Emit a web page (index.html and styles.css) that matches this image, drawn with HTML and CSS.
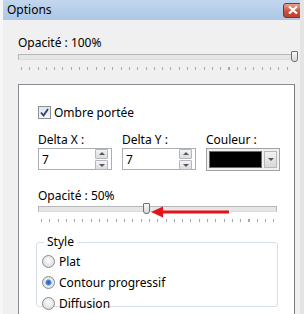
FILE: index.html
```html
<!DOCTYPE html>
<html lang="fr">
  <head>
    <meta charset="UTF-8" />
    <title>Options</title>
    <link rel="stylesheet" href="styles.css">
  </head>
  <body>
    <div class="window">
      <div class="titlebar">
        <span class="title">Options</span>
        <span class="close">
          <svg width="10" height="8" viewBox="0 0 10 8"><path d="M1 0.5 L9 7.5 M9 0.5 L1 7.5" stroke="#fff" stroke-width="2.2"/></svg>
        </span>
      </div>

      <div class="top">
        <div class="label">Opacité : 100%</div>
        <div class="slider slider-top">
          <div class="track"></div>
          <div class="thumb" style="left: 273px"></div>
          <div class="ticks"></div>
        </div>
      </div>

      <div class="panel">
        <label class="check-row">
          <span class="checkbox">
            <svg width="9" height="9" viewBox="0 0 9 9"><path d="M1 4.5 L3.5 7.5 L8 1" fill="none" stroke="#2c3e6e" stroke-width="1.8"/></svg>
          </span>
          Ombre portée
        </label>

        <div class="fields">
          <div class="field">
            <div class="field-label">Delta X :</div>
            <div class="spin">
              <span class="spin-value">7</span>
              <span class="spin-buttons">
                <span class="spin-btn up"></span>
                <span class="spin-btn down"></span>
              </span>
            </div>
          </div>
          <div class="field">
            <div class="field-label">Delta Y :</div>
            <div class="spin">
              <span class="spin-value">7</span>
              <span class="spin-buttons">
                <span class="spin-btn up"></span>
                <span class="spin-btn down"></span>
              </span>
            </div>
          </div>
          <div class="field">
            <div class="field-label">Couleur :</div>
            <div class="color-pick">
              <span class="swatch"></span>
              <span class="drop"></span>
            </div>
          </div>
        </div>

        <div class="label label-inner">Opacité : 50%</div>
        <div class="slider slider-inner">
          <div class="track"></div>
          <div class="thumb" style="left: 105px"></div>
          <div class="ticks"></div>
          <!-- red pointer drawn over the slider -->
          <svg class="arrow" width="80" height="12" viewBox="0 0 80 12">
            <path d="M0 6 L12 0.5 L12 11.5 Z" fill="#e3121b"/>
            <rect x="10" y="4.5" width="68" height="3" fill="#e3121b"/>
          </svg>
        </div>

        <fieldset class="group">
          <legend>Style</legend>
          <label class="radio-row"><span class="radio"></span>Plat</label>
          <label class="radio-row"><span class="radio checked"></span>Contour progressif</label>
          <label class="radio-row"><span class="radio"></span>Diffusion</label>
        </fieldset>
      </div>
    </div>
  </body>
</html>
```

FILE: styles.css
```css
body {
  margin: 0;
  font-family: "Noto Sans", "Open Sans", sans-serif;
  font-size: 12px;
  color: #000;
  background-color: #f0f0f0;
}
.window {
  width: 304px;
  height: 314px;
  overflow: hidden;
  background-color: #f0f0f0;
  box-sizing: border-box;
  border-left: 3px solid #f6f6f6;
  border-right: 4px solid #e4e4e4;
}
.titlebar {
  height: 20px;
  margin: 0 -4px 0 -3px;
  display: flex;
  align-items: center;
  justify-content: space-between;
  padding: 0 2px 0 7px;
  background: linear-gradient(to bottom, #c2d7ee, #adc7e5);
}
.title {
  line-height: 20px;
}
.close {
  width: 17px;
  height: 13px;
  display: flex;
  align-items: center;
  justify-content: center;
  border: 1px solid #6a3a3a;
  border-radius: 3px;
  background: linear-gradient(to bottom, #e6a592, #c9523f 55%, #c0402e);
}
.top {
  padding: 15px 0 0 15px;
}
.label {
  line-height: 15px;
}
.slider {
  position: relative;
}
.slider .track {
  height: 4px;
  border: 1px solid #b6b6b6;
  border-bottom-color: #dcdcdc;
  background-color: #e6e6e6;
}
.slider .thumb {
  position: absolute;
  top: -3px;
  width: 5px;
  height: 9px;
  border: 1px solid #707070;
  border-radius: 1px 1px 3px 3px;
  background: linear-gradient(to bottom, #f6f6f6, #dadada);
}
.slider .ticks {
  height: 3px;
  margin-top: 7px;
  background: repeating-linear-gradient(to right, #a8a8a8 0, #a8a8a8 1px, transparent 1px, transparent 8.3px);
}
.slider-top {
  margin-top: 4px;
  width: 279px;
}
.slider-top .ticks {
  margin-left: 3px;
  width: 274px;
}
.panel {
  margin: 14px 0 0 15px;
  height: 240px;
  background-color: #fff;
  border: 1px solid #898c95;
  border-right-color: #7a7a7a;
  width: 277px;
  padding: 20px 0 0 19px;
  box-sizing: border-box;
}
.check-row {
  display: flex;
  align-items: center;
  gap: 3px;
  height: 14px;
}
.checkbox {
  width: 11px;
  height: 11px;
  border: 1px solid #8e8f8f;
  background: linear-gradient(to bottom, #dfe6f2, #f4f6fa);
  display: flex;
  align-items: center;
  justify-content: center;
}
.fields {
  display: flex;
  gap: 10px;
  margin-top: 13px;
}
.field-label {
  line-height: 15px;
  height: 16px;
}
.spin {
  width: 74px;
  height: 22px;
  box-sizing: border-box;
  border: 1px solid #abadb3;
  display: flex;
  justify-content: space-between;
  align-items: center;
  padding: 0 3px 0 3px;
  background-color: #fff;
}
.spin-buttons {
  display: flex;
  flex-direction: column;
  gap: 1px;
}
.spin-btn {
  width: 11px;
  height: 8px;
  border: 1px solid #b5b7bc;
  border-radius: 1px;
  background: linear-gradient(to bottom, #f4f4f4, #dcdcdc);
  position: relative;
}
.spin-btn::after {
  content: "";
  position: absolute;
  left: 3px;
  border-left: 3px solid transparent;
  border-right: 3px solid transparent;
}
.spin-btn.up::after {
  top: 2px;
  border-bottom: 3px solid #4d5a6b;
}
.spin-btn.down::after {
  top: 3px;
  border-top: 3px solid #4d5a6b;
}
.color-pick {
  width: 74px;
  height: 23px;
  box-sizing: border-box;
  border: 1px solid #a2a2a2;
  display: flex;
  align-items: center;
  gap: 2px;
  padding: 2px;
  background-color: #f0f0f0;
}
.swatch {
  width: 53px;
  height: 17px;
  box-sizing: border-box;
  background-color: #000;
  border: 1px solid #6a6a6a;
}
.drop {
  width: 13px;
  height: 17px;
  box-sizing: border-box;
  border: 1px solid #b8b8b8;
  background: linear-gradient(to bottom, #f2f2f2, #d8d8d8);
  position: relative;
}
.drop::after {
  content: "";
  position: absolute;
  left: 3px;
  top: 6px;
  border-left: 3px solid transparent;
  border-right: 3px solid transparent;
  border-top: 3px solid #4d5a6b;
}
.label-inner {
  margin-top: 17px;
}
.slider-inner {
  margin-top: 3px;
  width: 239px;
}
.slider-inner .ticks {
  margin-left: 3px;
  width: 234px;
}
.arrow {
  position: absolute;
  left: 113px;
  top: 0px;
}
.group {
  margin: 13px 0 0 -2px;
  width: 242px;
  height: 72px;
  box-sizing: border-box;
  border: 1px solid #d5dfe5;
  border-radius: 3px;
  padding: 2px 0 0 5px;
}
.group legend {
  padding: 0 3px;
  margin-left: 2px;
  line-height: 14px;
}
.radio-row {
  display: flex;
  align-items: center;
  gap: 4px;
  height: 21px;
}
.radio {
  width: 11px;
  height: 11px;
  border: 1px solid #8a8a8a;
  border-radius: 50%;
  background: radial-gradient(circle at 50% 40%, #ffffff, #d2d2d2);
}
.radio.checked {
  background: radial-gradient(circle, #2a5da8 0, #4b8bd6 2.5px, #e8eef6 3.5px, #d6d9de 100%);
}
```
